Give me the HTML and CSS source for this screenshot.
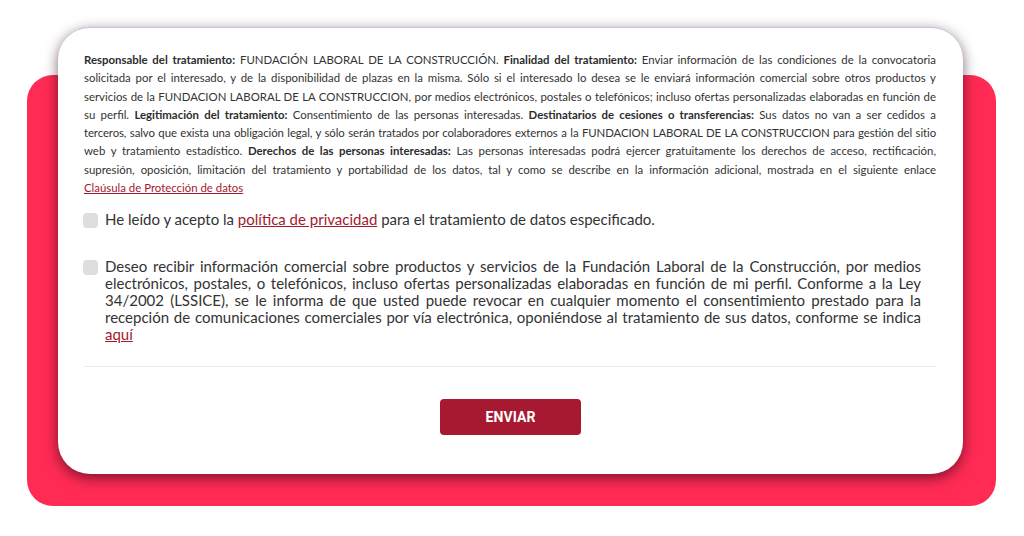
FILE: index.html
```html
<!DOCTYPE html>
<html lang="es">
<head>
<meta charset="utf-8">
<title>Formulario</title>
<link rel="stylesheet" href="styles.css">
</head>
<body>
<div class="stage">
  <div class="pink"></div>
  <div class="card">
    <div class="legal">
      <span class="ln"><b>Responsable del tratamiento:</b> FUNDACIÓN LABORAL DE LA CONSTRUCCIÓN. <b>Finalidad del tratamiento:</b> Enviar información de las condiciones de la convocatoria</span>
      <span class="ln">solicitada por el interesado, y de la disponibilidad de plazas en la misma. Sólo si el interesado lo desea se le enviará información comercial sobre otros productos y</span>
      <span class="ln">servicios de la FUNDACION LABORAL DE LA CONSTRUCCION, por medios electrónicos, postales o telefónicos; incluso ofertas personalizadas elaboradas en función de</span>
      <span class="ln">su perfil. <b>Legitimación del tratamiento:</b> Consentimiento de las personas interesadas. <b>Destinatarios de cesiones o transferencias:</b> Sus datos no van a ser cedidos a</span>
      <span class="ln tight">terceros, salvo que exista una obligación legal, y sólo serán tratados por colaboradores externos a la FUNDACION LABORAL DE LA CONSTRUCCION para gestión del sitio</span>
      <span class="ln">web y tratamiento estadístico. <b>Derechos de las personas interesadas:</b> Las personas interesadas podrá ejercer gratuitamente los derechos de acceso, rectificación,</span>
      <span class="ln">supresión, oposición, limitación del tratamiento y portabilidad de los datos, tal y como se describe en la información adicional, mostrada en el siguiente enlace</span>
      <span class="ln last"><a href="#">Claúsula de Protección de datos</a></span>
    </div>

    <label class="check first">
      <span class="box"></span>
      <span class="ctext"><span class="ln last">He leído y acepto la <a href="#">política de privacidad</a> para el tratamiento de datos especificado.</span></span>
    </label>

    <label class="check second">
      <span class="box"></span>
      <span class="ctext">
        <span class="ln">Deseo recibir información comercial sobre productos y servicios de la Fundación Laboral de la Construcción, por medios</span>
        <span class="ln">electrónicos, postales, o telefónicos, incluso ofertas personalizadas elaboradas en función de mi perfil. Conforme a la Ley</span>
        <span class="ln">34/2002 (LSSICE), se le informa de que usted puede revocar en cualquier momento el consentimiento prestado para la</span>
        <span class="ln">recepción de comunicaciones comerciales por vía electrónica, oponiéndose al tratamiento de sus datos, conforme se indica</span>
        <span class="ln last"><a href="#">aquí</a></span>
      </span>
    </label>

    <div class="divider"></div>

    <div class="actions">
      <button class="btn" type="button">ENVIAR</button>
    </div>
  </div>
</div>
</body>
</html>
```
FILE: styles.css
```css
* { box-sizing: border-box; }
html, body { margin: 0; padding: 0; background: #ffffff; }
body { font-family: Lato, "Open Sans", "Liberation Sans", sans-serif; color: #333333; }

.stage {
  width: 1024px;
  height: 536px;
  display: grid;
  grid-template-columns: 1024px;
  grid-template-rows: 536px;
  overflow: hidden;
}
.pink {
  grid-area: 1 / 1;
  margin: 75px 28px 30px 27px;
  background: #ff2b55;
  border-radius: 26px;
}
.card {
  grid-area: 1 / 1;
  min-width: 0;
  margin: 27px 61px 62px 58px;
  background: #ffffff;
  border-radius: 32px;
  box-shadow: 0 4px 14px rgba(40, 0, 20, 0.6);
  padding: 23px 27px 0 26px;
  display: flex;
  flex-direction: column;
  border-top: 1px solid #cdbde8;
}

.ln { display: block; text-align: justify; text-align-last: justify; white-space: nowrap; }
.ln.last { text-align-last: left; }

.legal {
  font-size: 11.4px;
  line-height: 18.3px;
  min-width: 0;
}
.legal .tight { letter-spacing: -0.1px; }
.legal b { font-weight: 700; color: #2d2d2d; }

a { color: #a3192f; text-decoration: underline; }

.check {
  display: flex;
  align-items: flex-start;
  gap: 7px;
  font-size: 15px;
  line-height: 16.8px;
  color: #333;
}
.check.first { margin-top: 14px; }
.check.second { margin-top: 30px; width: 837px; }
.box {
  flex: 0 0 15px;
  width: 15px;
  height: 15px;
  border-radius: 4px;
  background: #dedede;
  margin-top: 2px;
  margin-left: -1px;
}
.ctext { display: block; flex: 1; min-width: 0; }

.divider {
  height: 1px;
  background: #ececec;
  margin-top: 24px;
}
.actions {
  display: flex;
  justify-content: center;
  margin-top: 32px;
}
.btn {
  width: 141px;
  height: 36px;
  background: #a71931;
  color: #fff;
  border: 0;
  border-radius: 4px;
  font-family: Roboto, "Liberation Sans", sans-serif;
  font-weight: 700;
  font-size: 14px;
  letter-spacing: 0.1px;
  margin-left: 1px;
}
```
